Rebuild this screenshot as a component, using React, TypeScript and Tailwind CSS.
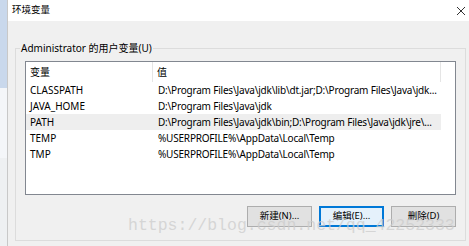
import React from 'react';

const rows = [
  { name: 'CLASSPATH', value: 'D:\\Program Files\\Java\\jdk\\lib\\dt.jar;D:\\Program Files\\Java\\jdk...' },
  { name: 'JAVA_HOME', value: 'D:\\Program Files\\Java\\jdk' },
  { name: 'PATH', value: 'D:\\Program Files\\Java\\jdk\\bin;D:\\Program Files\\Java\\jdk\\jre\\...', selected: true },
  { name: 'TEMP', value: '%USERPROFILE%\\AppData\\Local\\Temp' },
  { name: 'TMP', value: '%USERPROFILE%\\AppData\\Local\\Temp' },
];

export default function App() {
  return (
    <div
      className="relative flex w-[469px] h-[246px] overflow-hidden text-[10px] text-black"
      style={{ fontFamily: '"Noto Sans", "Noto Sans CJK SC", sans-serif' }}
    >
      {/* window behind, left edge */}
      <div className="w-[8px] flex flex-col bg-[#e8eef6] border-r border-[#c8c8c8]">
        <div className="h-[88px] bg-[#c9d8ec]" />
        <div className="h-[70px] bg-[#f4f6f9]" />
        <div className="h-[88px] bg-[#eef0f2]" />
      </div>

      <div className="flex-1 flex flex-col bg-[#f0f0f0]">
        {/* title bar */}
        <div className="h-[21px] bg-white flex items-center justify-between pl-[4px] pr-[3px]">
          <span className="text-[9.5px]">环境变量</span>
          <svg width="10" height="10" viewBox="0 0 10 10">
            <path d="M1 1 L9 9 M9 1 L1 9" stroke="#333" strokeWidth="1" />
          </svg>
        </div>

        {/* body */}
        <div className="flex-1 pl-[7px] pr-[3px] pt-[20px] pb-[4px]">
          <fieldset className="h-[200px] border border-[#dcdcdc] px-[9px] pb-[13px] flex flex-col">
            <legend className="px-[1px] -ml-[5px] leading-[14px]">Administrator 的用户变量(U)</legend>

            <div className="mt-[6px] h-[135px] border border-[#828790] bg-white flex">
              <div className="w-[415px] flex flex-col">
                <div className="h-[20px] flex items-center">
                  <div className="w-[127px] h-full flex items-center pl-[4px] border-r border-[#e5e5e5]">变量</div>
                  <div className="flex-1 h-full flex items-center pl-[4px] border-r border-[#e5e5e5]">值</div>
                </div>
                {rows.map(r => (
                  <div
                    key={r.name}
                    className={`h-[16px] flex items-center ${r.selected ? 'bg-[#eeeeee]' : ''}`}
                  >
                    <div className="w-[128px] pl-[4px]">{r.name}</div>
                    <div className="flex-1 min-w-0 pl-[4px] whitespace-nowrap overflow-hidden tracking-[-0.2px]">{r.value}</div>
                  </div>
                ))}
              </div>
              <div className="flex-1" />
            </div>

            <div className="mt-[11px] flex justify-end gap-[7px]">
              <button className="w-[65px] h-[21px] bg-[#e1e1e1] border border-[#adadad] text-[9.5px] whitespace-nowrap">新建(N)...</button>
              <button className="w-[65px] h-[21px] bg-[#e5f1fb] border-2 border-[#0078d7] text-[9.5px] whitespace-nowrap">编辑(E)...</button>
              <button className="w-[65px] h-[21px] bg-[#e1e1e1] border border-[#adadad] text-[9.5px] whitespace-nowrap">删除(D)</button>
            </div>
          </fieldset>
        </div>
      </div>

      {/* watermark */}
      <div
        className="absolute left-[128px] top-[214px] text-[16.5px] text-[#cccccc]/75 pointer-events-none whitespace-nowrap"
        style={{ fontFamily: '"Liberation Mono", monospace' }}
      >
        https://blog.csdn.net/qq_42252333
      </div>
    </div>
  );
}
